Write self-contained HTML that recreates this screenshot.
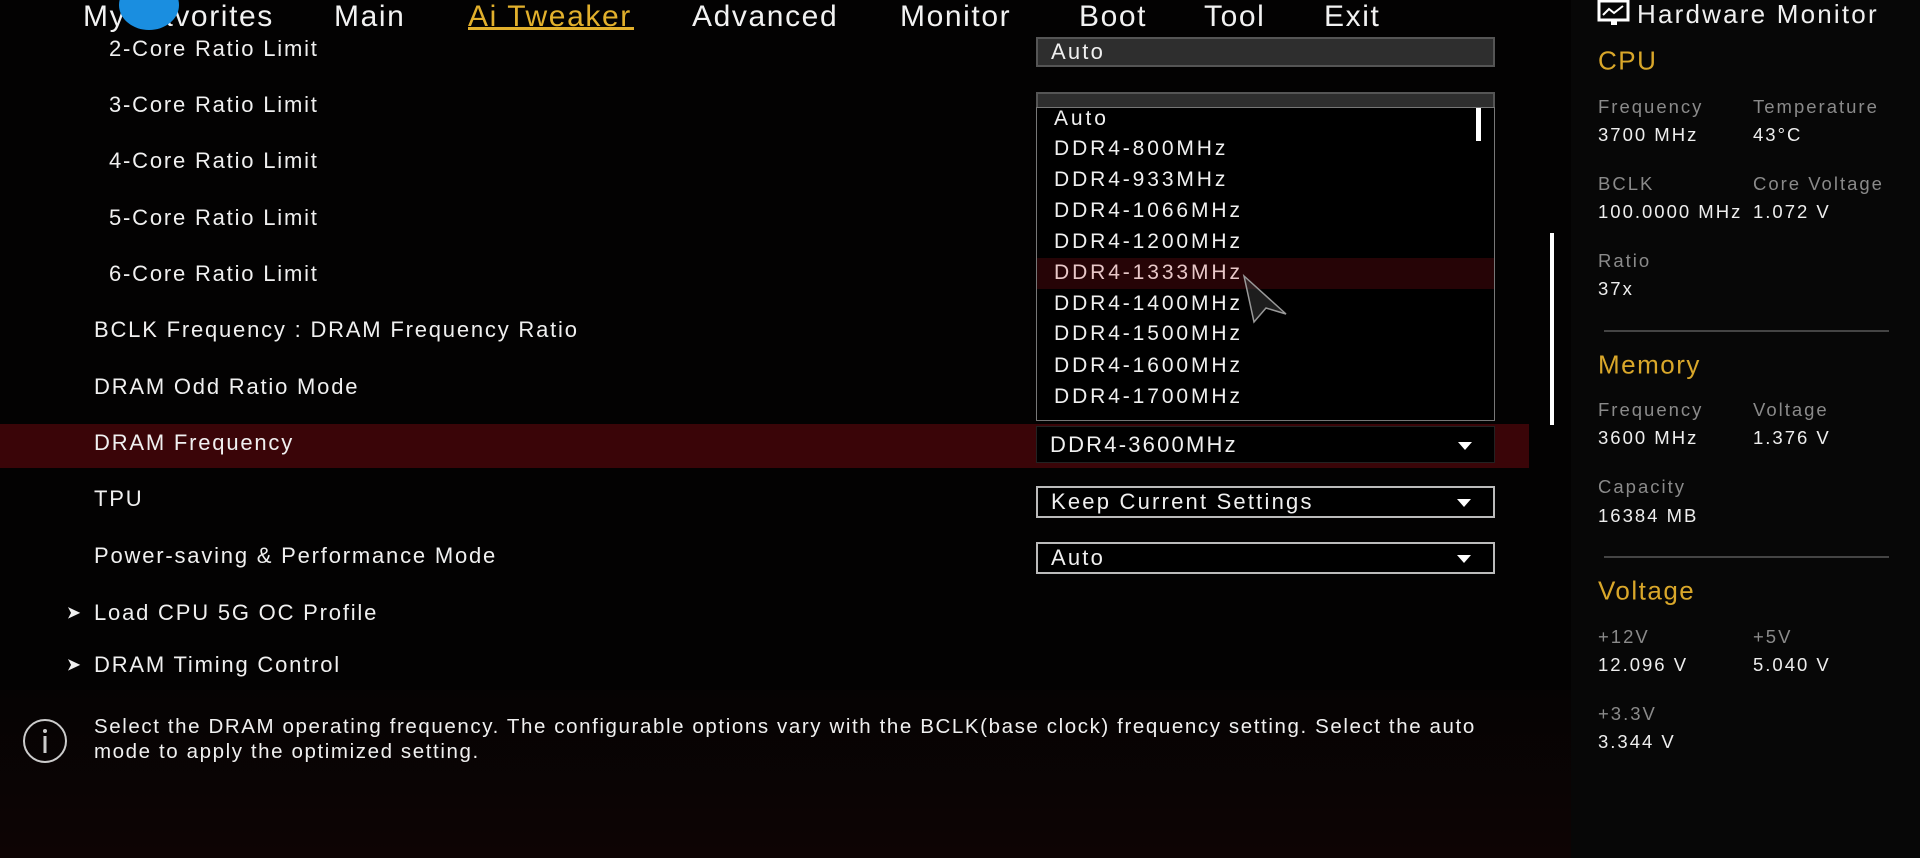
<!DOCTYPE html>
<html><head><meta charset="utf-8"><style>
*{margin:0;padding:0;box-sizing:border-box}
body{width:1920px;height:858px;background:#030202;overflow:hidden;position:relative;font-family:"Liberation Sans",sans-serif;color:#f0f0f0}
.a{position:absolute;white-space:nowrap}
.nav{font-size:30px;top:0px;letter-spacing:1.6px;color:#f2f2f2}
.lbl{font-size:22px;letter-spacing:1.8px;transform:translateY(-50%)}
.box{position:absolute;left:1036px;width:459px;font-size:22px;letter-spacing:2.2px;padding-left:13px;display:flex;align-items:center}
.caret{position:absolute;right:22px;top:50%;margin-top:-3px;border-left:7px solid transparent;border-right:7px solid transparent;border-top:8px solid #fff}
.it{position:absolute;left:1054px;font-size:21px;letter-spacing:2.9px;transform:translateY(-50%)}
.hl{font-size:18.5px;letter-spacing:2px;color:#8a8a8a;transform:translateY(-50%)}
.hv{font-size:18.5px;letter-spacing:2px;color:#eee;transform:translateY(-50%)}
.hh{font-size:26px;letter-spacing:1.5px;color:#d9a72a;transform:translateY(-50%)}
</style></head><body>
<div class="a" style="left:1571px;top:0;width:349px;height:858px;background:#070707"></div>
<div class="a" style="left:0;top:690px;width:1571px;height:168px;background:linear-gradient(#050303,#0e0404)"></div>

<div class="a nav" style="left:83px">My Favorites</div>
<div class="a" style="left:119px;top:-20px;width:60px;height:50px;border-radius:50%;background:#1a8ee0"></div>
<div class="a nav" style="left:334px">Main</div>
<div class="a nav" style="left:468px;color:#e2b02c">Ai Tweaker</div>
<div class="a" style="left:468px;top:27px;width:166px;height:3px;background:#e2b02c"></div>
<div class="a nav" style="left:692px">Advanced</div>
<div class="a nav" style="left:900px">Monitor</div>
<div class="a nav" style="left:1079px">Boot</div>
<div class="a nav" style="left:1204px">Tool</div>
<div class="a nav" style="left:1324px">Exit</div>

<svg class="a" style="left:1597px;top:0" width="34" height="28" viewBox="0 0 34 28"><rect x="2" y="1" width="29" height="19" fill="none" stroke="#fff" stroke-width="3"/><path d="M6 15 L12 9 L17 13 L26 6" fill="none" stroke="#fff" stroke-width="2"/><rect x="14" y="20" width="6" height="5" fill="#fff"/></svg>
<div class="a" style="left:1637px;top:-1px;font-size:26px;letter-spacing:2.2px">Hardware Monitor</div>

<div class="a lbl" style="left:109px;top:49px">2-Core Ratio Limit</div>
<div class="a lbl" style="left:109px;top:105px">3-Core Ratio Limit</div>
<div class="a lbl" style="left:109px;top:161px">4-Core Ratio Limit</div>
<div class="a lbl" style="left:109px;top:218px">5-Core Ratio Limit</div>
<div class="a lbl" style="left:109px;top:274px">6-Core Ratio Limit</div>
<div class="a lbl" style="left:94px;top:330px">BCLK Frequency : DRAM Frequency Ratio</div>
<div class="a lbl" style="left:94px;top:387px">DRAM Odd Ratio Mode</div>
<div class="a" style="left:0;top:424px;width:1529px;height:44px;background:#3a0508"></div>
<div class="a lbl" style="left:94px;top:443px">DRAM Frequency</div>
<div class="a lbl" style="left:94px;top:499px">TPU</div>
<div class="a lbl" style="left:94px;top:556px">Power-saving &amp; Performance Mode</div>
<div class="a lbl" style="left:66px;top:613px;font-size:18px">&#10148;</div>
<div class="a lbl" style="left:94px;top:613px">Load CPU 5G OC Profile</div>
<div class="a lbl" style="left:66px;top:665px;font-size:18px">&#10148;</div>
<div class="a lbl" style="left:94px;top:665px">DRAM Timing Control</div>

<div class="box" style="top:37px;height:30px;background:#2e2e2e;border:2px solid #555">Auto</div>
<div class="box" style="top:92px;height:30px;background:#2e2e2e;border:2px solid #555"></div>
<div class="box" style="top:426px;height:37px;background:#000;border:1px solid #222">DDR4-3600MHz<span class="caret"></span></div>
<div class="box" style="top:486px;height:32px;background:#000;border:2px solid #bbb">Keep Current Settings<span class="caret"></span></div>
<div class="box" style="top:542px;height:32px;background:#000;border:2px solid #bbb">Auto<span class="caret"></span></div>

<div class="a" style="left:1036px;top:107px;width:459px;height:314px;background:#000;border:1px solid #777"></div>
<div class="a" style="left:1037px;top:258px;width:457px;height:31px;background:#260406"></div>
<div class="a" style="left:1476px;top:108px;width:5px;height:33px;background:#fff"></div>
<div class="it" style="top:119px">Auto</div>
<div class="it" style="top:149px">DDR4-800MHz</div>
<div class="it" style="top:180px">DDR4-933MHz</div>
<div class="it" style="top:211px">DDR4-1066MHz</div>
<div class="it" style="top:242px">DDR4-1200MHz</div>
<div class="it" style="top:273px;color:#e8c8c8">DDR4-1333MHz</div>
<div class="it" style="top:304px">DDR4-1400MHz</div>
<div class="it" style="top:334px">DDR4-1500MHz</div>
<div class="it" style="top:366px">DDR4-1600MHz</div>
<div class="it" style="top:397px">DDR4-1700MHz</div>
<svg class="a" style="left:1240px;top:274px" width="50" height="52"><path d="M4 2 L46 40 L26 34 L14 48 Z" fill="rgba(60,60,60,0.5)" stroke="#999" stroke-width="1.5"/></svg>
<div class="a" style="left:1550px;top:233px;width:4px;height:192px;background:#fff"></div>

<svg class="a" style="left:20px;top:717px" width="50" height="48"><circle cx="25" cy="24" r="21" fill="none" stroke="#ccc" stroke-width="2"/><circle cx="25" cy="14" r="2" fill="#ccc"/><rect x="23.5" y="19" width="3" height="17" fill="#ccc"/></svg>
<div class="a" style="left:94px;top:714px;font-size:20.5px;line-height:25px;letter-spacing:1.6px">Select the DRAM operating frequency. The configurable options vary with the BCLK(base clock) frequency setting. Select the auto<br>mode to apply the optimized setting.</div>

<div class="a hh" style="left:1598px;top:61px">CPU</div>
<div class="a hl" style="left:1598px;top:107px">Frequency</div><div class="a hl" style="left:1753px;top:107px">Temperature</div>
<div class="a hv" style="left:1598px;top:135px">3700 MHz</div><div class="a hv" style="left:1753px;top:135px">43°C</div>
<div class="a hl" style="left:1598px;top:184px">BCLK</div><div class="a hl" style="left:1753px;top:184px">Core Voltage</div>
<div class="a hv" style="left:1598px;top:212px">100.0000 MHz</div><div class="a hv" style="left:1753px;top:212px">1.072 V</div>
<div class="a hl" style="left:1598px;top:261px">Ratio</div>
<div class="a hv" style="left:1598px;top:289px">37x</div>
<div class="a" style="left:1604px;top:330px;width:285px;height:2px;background:#444"></div>
<div class="a hh" style="left:1598px;top:365px">Memory</div>
<div class="a hl" style="left:1598px;top:410px">Frequency</div><div class="a hl" style="left:1753px;top:410px">Voltage</div>
<div class="a hv" style="left:1598px;top:438px">3600 MHz</div><div class="a hv" style="left:1753px;top:438px">1.376 V</div>
<div class="a hl" style="left:1598px;top:487px">Capacity</div>
<div class="a hv" style="left:1598px;top:516px">16384 MB</div>
<div class="a" style="left:1604px;top:556px;width:285px;height:2px;background:#444"></div>
<div class="a hh" style="left:1598px;top:591px">Voltage</div>
<div class="a hl" style="left:1598px;top:637px">+12V</div><div class="a hl" style="left:1753px;top:637px">+5V</div>
<div class="a hv" style="left:1598px;top:665px">12.096 V</div><div class="a hv" style="left:1753px;top:665px">5.040 V</div>
<div class="a hl" style="left:1598px;top:714px">+3.3V</div>
<div class="a hv" style="left:1598px;top:742px">3.344 V</div>
</body></html>
